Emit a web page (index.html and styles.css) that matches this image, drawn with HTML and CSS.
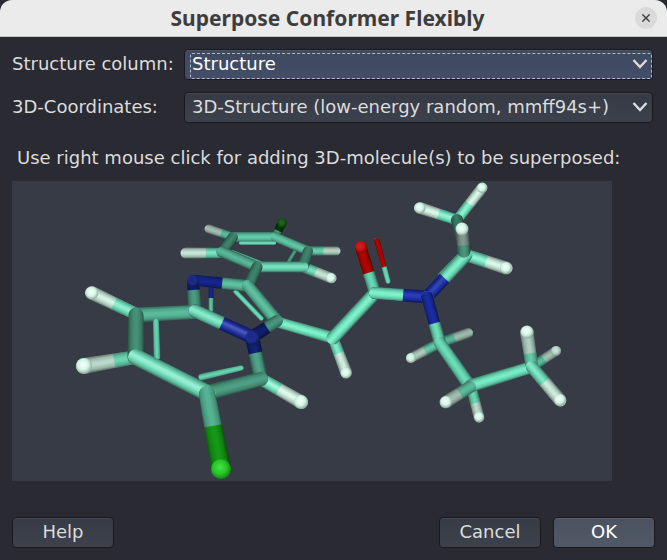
FILE: index.html
```html
<!DOCTYPE html>
<html lang="en">
<head>
<meta charset="utf-8">
<meta name="viewport" content="width=device-width, initial-scale=1">
<title>Superpose Conformer Flexibly</title>
<link rel="stylesheet" href="styles.css">
</head>
<body>
<main class="dialog">
  <header class="titlebar">
    <h1 class="title">Superpose Conformer Flexibly</h1>
    <button class="close" type="button" aria-label="Close">
      <svg viewBox="0 0 8 8" width="8" height="8" aria-hidden="true"><path d="M0.4 0.4 7.6 7.6M7.6 0.4 0.4 7.6"/></svg>
    </button>
  </header>
  <form class="content">
    <div class="fields">
      <label for="structure">Structure column:</label>
      <div class="combo combo-focused">
        <select id="structure"><option>Structure</option></select>
        <svg class="chevron" viewBox="0 0 16 10" width="16" height="10" aria-hidden="true"><path d="M1.5 1 8 8 14.5 1"/></svg>
      </div>
      <label for="coords">3D-Coordinates:</label>
      <div class="combo">
        <select id="coords"><option>3D-Structure (low-energy random, mmff94s+)</option></select>
        <svg class="chevron" viewBox="0 0 16 10" width="16" height="10" aria-hidden="true"><path d="M1.5 1 8 8 14.5 1"/></svg>
      </div>
    </div>
    <p class="hint">Use right mouse click for adding 3D-molecule(s) to be superposed:</p>
    <div class="viewer">
      <svg id="molecule" viewBox="12 181 600 300" role="img" aria-label="3D molecule"></svg>
    </div>
    <footer class="actions">
      <button class="btn" type="button">Help</button>
      <span class="spacer"></span>
      <button class="btn" type="button">Cancel</button>
      <button class="btn btn-default" type="submit">OK</button>
    </footer>
  </form>
</main>
<script src="molecule.js"></script>
</body>
</html>
```

FILE: styles.css
```css
* { box-sizing: border-box; }

body {
  margin: 0;
  background: #2a2a32;
  color: #dcdcdc;
  font: 18px/24px "DejaVu Sans", sans-serif;
}

.dialog {
  display: flex;
  flex-direction: column;
  min-height: 100vh;
}

.titlebar {
  display: grid;
  grid-template-columns: 20px 1fr 32px;
  align-items: center;
  height: 37px;
  padding: 0 5px;
  background: #ebebeb;
  border-bottom: 1px solid #c4c4c4;
  border-radius: 12px 12px 0 0;
}

.title {
  grid-column: 2;
  margin: 0;
  text-align: center;
  white-space: nowrap;
  color: #3d3d3d;
  font: bold 21px/24px "Noto Sans", sans-serif;
}

.close {
  display: grid;
  place-items: center;
  justify-self: center;
  width: 22px;
  height: 22px;
  padding: 0;
  border: 0;
  border-radius: 50%;
  background: #dadada;
}

.close path { stroke: #3d3d3d; stroke-width: 1.4; fill: none; }

.content {
  display: flex;
  flex: 1;
  flex-direction: column;
  padding: 12px;
}

.fields {
  display: grid;
  grid-template-columns: 160px 1fr;
  column-gap: 12px;
  row-gap: 12px;
  align-items: center;
  margin-right: 2px;
}

.fields label { white-space: nowrap; padding-bottom: 2px; }

.combo { position: relative; height: 31px; }

.combo select {
  width: 100%;
  height: 100%;
  padding: 0 32px 2px 7px;
  appearance: none;
  border: 1px solid #191a20;
  border-radius: 4px;
  outline: 0;
  background: linear-gradient(#363a45, #3c414c);
  box-shadow: inset 0 1px #454953;
  color: #dcdcdc;
  font: inherit;
}

.combo-focused select {
  background: linear-gradient(#3e4a60, #434d67);
  box-shadow: inset 0 1px #4b566b;
  color: #fff;
}

.combo-focused::after {
  content: "";
  position: absolute;
  inset: 4px 1px 1px 6px;
  border: 1px dashed #b4bbc8;
  border-radius: 2px;
  pointer-events: none;
}

.chevron {
  position: absolute;
  top: 10px;
  right: 5px;
  pointer-events: none;
}

.chevron path { fill: none; stroke: #dcdcdc; stroke-width: 2.4; }

.hint { margin: 23px 0 11px 5px; }

.viewer { margin-right: 43px; background: #373b45; }

.viewer svg { display: block; width: 100%; height: auto; }

.actions {
  display: flex;
  gap: 12px;
  margin-top: auto;
}

.spacer { flex: 1; }

.btn {
  width: 102px;
  height: 31px;
  padding: 0 0 2px;
  border: 1px solid #191a20;
  border-radius: 4px;
  background: linear-gradient(#363b45, #3c414c);
  box-shadow: inset 0 1px #454953;
  color: #dcdcdc;
  font: inherit;
}

.btn-default {
  background: linear-gradient(#4b515f, #515967);
  box-shadow: inset 0 1px #5b616d;
  color: #fff;
}
```

FILE: molecule.js
```js
const NS = "http://www.w3.org/2000/svg";
const svg = document.getElementById("molecule");
let nextId = 0;

const COLORS = {
  C: [116, 240, 200],
  H: [208, 244, 228],
  N: [28, 48, 176],
  O: [196, 6, 6],
  L: [28, 206, 28],
  D: [8, 92, 8]
};

function add(name, attrs, parent = svg) {
  const el = document.createElementNS(NS, name);
  for (const key in attrs) el.setAttribute(key, attrs[key]);
  parent.appendChild(el);
  return el;
}

function tone(rgb, k, white = 0) {
  return "rgb(" + rgb.map(v => Math.min(255, Math.round(v * k + (255 - v * k) * white))).join(",") + ")";
}

// A tube between two points, lit across its width; ends have round caps.
function tube(x1, y1, w1, x2, y2, w2, color, light, shine) {
  const len = Math.hypot(x2 - x1, y2 - y1);
  let nx = -(y2 - y1) / len, ny = (x2 - x1) / len;
  if (nx + ny > 0) { nx = -nx; ny = -ny; }
  const rgb = COLORS[color];
  const w = Math.max(w1, w2) / 2;
  const id = "g" + nextId++;
  const g = add("linearGradient", {
    id, gradientUnits: "userSpaceOnUse",
    x1: x1 + nx * w, y1: y1 + ny * w, x2: x1 - nx * w, y2: y1 - ny * w
  });
  [[0, 0.55, 0], [0.2, 0.86, 0], [0.42, 1, shine], [0.58, 1, shine * 0.5], [0.82, 0.82, 0], [1, 0.45, 0]]
    .forEach(([o, k, s]) => add("stop", { offset: o, "stop-color": tone(rgb, k * light, s) }, g));
  const a = w1 / 2, b = w2 / 2;
  const sweep = nx * (y2 - y1) - ny * (x2 - x1) < 0 ? 0 : 1;
  add("path", {
    fill: `url(#${id})`,
    d: `M${x1 + nx * a} ${y1 + ny * a}L${x2 + nx * b} ${y2 + ny * b}` +
       `A${b} ${b} 0 0 ${sweep} ${x2 - nx * b} ${y2 - ny * b}L${x1 - nx * a} ${y1 - ny * a}` +
       `A${a} ${a} 0 0 ${sweep} ${x1 + nx * a} ${y1 + ny * a}Z`
  });
}

// Two-colour bond: the first colour runs to fraction t, cut square there.
function bond(x1, y1, w1, x2, y2, w2, c1, c2 = c1, t = 0.5, light = 1, shine = 0.1) {
  if (c1 === c2) return tube(x1, y1, w1, x2, y2, w2, c1, light, shine);
  tube(x1, y1, w1, x2, y2, w2, c2, light, shine);
  const mx = x1 + (x2 - x1) * t, my = y1 + (y2 - y1) * t;
  const len = Math.hypot(x2 - x1, y2 - y1), ux = (x2 - x1) / len, uy = (y2 - y1) / len;
  const id = "c" + nextId++, r = 14;
  const clip = add("clipPath", { id });
  add("polygon", {
    points: [[mx - uy * r, my + ux * r], [mx + uy * r, my - ux * r],
      [x1 - ux * r + uy * r, y1 - uy * r - ux * r], [x1 - ux * r - uy * r, y1 - uy * r + ux * r]].join(" ")
  }, clip);
  tube(x1, y1, w1, x2, y2, w2, c1, light, shine);
  svg.lastChild.setAttribute("clip-path", `url(#${id})`);
}

function ball(x, y, r, color, light = 1, shine = 0.6) {
  const id = "b" + nextId++, rgb = COLORS[color];
  const g = add("radialGradient", { id, cx: 0.45, cy: 0.42, r: 0.6 });
  add("stop", { offset: 0, "stop-color": tone(rgb, 1.1 * light, shine) }, g);
  add("stop", { offset: 0.55, "stop-color": tone(rgb, light, 0.05) }, g);
  add("stop", { offset: 1, "stop-color": tone(rgb, 0.65 * light) }, g);
  add("circle", { cx: x, cy: y, r, fill: `url(#${id})` });
}

// Rear chlorophenyl ring
bond(275, 237, 8, 282, 223, 9, "C", "D", 0.45, 0.62, 0);
ball(282, 223, 4.5, "D", 0.9, 0.1);
bond(233, 237, 8, 209, 229, 9, "C", "H", 0.5, 0.78, 0);
bond(308, 251, 9, 336, 251, 9, "C", "H", 0.55, 0.85, 0.05);
bond(295, 251, 4, 289, 261, 4, "C", "C", 0, 0.65, 0);
bond(233, 237, 10, 275, 237, 10, "C", "C", 0, 0.84, 0);
bond(275, 237, 9, 308, 251, 10, "C", "C", 0, 0.82, 0);
bond(241, 243, 4, 274, 243, 4, "C", "C", 0, 0.92, 0);
bond(233, 252, 4, 261, 263, 4, "C", "C", 0, 0.85, 0);
bond(222, 253, 10, 186, 253, 11, "C", "H", 0.45, 0.92, 0.15);
bond(233, 237, 10, 222, 252, 11, "C", "C", 0, 0.54, 0);
bond(303, 267, 10, 331, 278, 11, "C", "H", 0.45, 0.92, 0.1);
ball(331, 278, 5, "H");
bond(308, 251, 10, 303, 266, 12, "C", "C", 0, 0.54, 0);
bond(222, 252, 11, 257, 267, 11, "C", "C", 0, 0.76, 0);
bond(257, 267, 11, 303, 267, 11, "C", "C", 0, 0.92, 0.1);
bond(257, 267, 11, 249, 285, 12, "C", "C", 0, 0.54, 0);

// Imidazole ring
bond(211, 288, 5, 211, 310, 5, "N", "C", 0.45, 0.8, 0);
bond(236, 292, 5, 261, 318, 5, "C", "C", 0, 0.92, 0);
bond(193, 281, 12, 195, 311, 14, "N", "C", 0.3, 0.64, 0);
bond(193, 280, 11, 248, 286, 12, "N", "C", 0.53, 0.8, 0);
ball(193, 281, 6, "N", 0.7, 0);
bond(248, 286, 12, 277, 321, 13, "C", "C", 0, 0.8, 0);

// Side chain up to the carbonyl
bond(277, 322, 11, 333, 338, 12, "C", "C", 0, 1, 0.08);
bond(252, 337, 13, 277, 321, 12, "N", "C", 0.6, 0.62, 0);
bond(333, 338, 10, 346, 372, 12, "C", "H", 0.45, 0.96, 0.15);
ball(346, 373, 5.5, "H");
bond(333, 338, 13, 375, 293, 13, "C", "C", 0, 1, 0.08);
bond(377, 241, 6, 388, 281, 5, "O", "C", 0.65, 0.9, 0);
bond(361, 248, 12, 375, 293, 12, "O", "C", 0.55, 0.9, 0);
ball(361, 247, 6, "O", 1, 0.1);

// Fused six-membered ring
bond(136, 314, 12, 92, 293, 14, "C", "H", 0.5, 0.98, 0.25);
ball(92, 293, 6.5, "H");
bond(136, 315, 15, 195, 312, 14, "C", "C", 0, 0.78, 0);
bond(156, 322, 6, 157, 356, 7, "C", "C", 0, 0.88, 0);
bond(202, 377, 7, 241, 368, 5, "C", "C", 0, 0.88, 0);
bond(136, 357, 13, 84, 366, 16, "C", "H", 0.42, 0.88, 0.05);
ball(84, 366, 8, "H", 1, 0.9);
bond(136, 315, 15, 136, 357, 17, "C", "C", 0, 0.6, 0);
bond(261, 379, 12, 301, 402, 14, "C", "H", 0.45, 1, 0.4);
ball(301, 402, 7, "H");
bond(252, 337, 14, 261, 379, 14, "N", "C", 0.38, 0.68, 0);
bond(195, 311, 13, 252, 337, 14, "C", "N", 0.47, 0.95, 0.22);
ball(252, 338, 7, "N", 0.75, 0);
bond(261, 379, 14, 207, 393, 16, "C", "C", 0, 0.66, 0);
bond(136, 357, 16, 207, 393, 17, "C", "C", 0, 0.97, 0.3);
bond(207, 394, 16, 221, 468, 20, "C", "L", 0.43, 0.74, 0);
ball(221, 469, 10, "L", 0.95, 0.2);

// Amide nitrogen and upper ethyl group
bond(440, 275, 4, 460, 256, 7, "C", "C", 0, 0.75, 0);
bond(457, 220, 10, 482, 188, 11, "C", "H", 0.5, 1, 0.2);
ball(482, 188, 5, "H");
bond(457, 220, 10, 420, 208, 12, "C", "H", 0.5, 1, 0.25);
ball(420, 208, 5.5, "H");
bond(457, 220, 12, 465, 252, 13, "C", "C", 0, 0.5, 0);
bond(466, 255, 12, 506, 268, 13, "C", "H", 0.5, 1, 0.25);
ball(506, 268, 6, "H");
bond(427, 297, 13, 466, 255, 13, "N", "C", 0.45, 0.98, 0.12);
bond(464, 251, 13, 462, 229, 13, "C", "H", 0.25, 0.62, 0);
ball(462, 229, 6.5, "H");
bond(375, 293, 12, 427, 297, 13, "C", "N", 0.54, 1, 0.08);

// Lower propyl group
bond(440, 343, 10, 468, 333, 10, "C", "H", 0.52, 0.76, 0);
bond(440, 343, 10, 411, 358, 10, "C", "H", 0.52, 0.82, 0.05);
ball(411, 358, 5, "H", 0.95, 0.3);
bond(427, 297, 12, 440, 343, 12, "N", "C", 0.57, 0.92, 0);
bond(471, 386, 10, 479, 417, 11, "C", "H", 0.55, 0.88, 0.05);
ball(479, 417, 5, "H", 1, 0.4);
bond(440, 343, 12, 470, 386, 13, "C", "C", 0, 0.92, 0);
bond(532, 367, 10, 556, 351, 10, "C", "H", 0.5, 0.78, 0);
ball(556, 351, 5, "H", 0.85, 0.2);
bond(470, 386, 13, 532, 367, 12, "C", "C", 0, 0.98, 0.04);
bond(470, 387, 12, 446, 402, 13, "C", "H", 0.42, 0.78, 0);
ball(446, 402, 6, "H", 1, 0.9);
bond(532, 367, 12, 527, 333, 14, "C", "H", 0.4, 0.84, 0);
ball(527, 332, 6.5, "H", 1, 0.9);
bond(532, 367, 12, 560, 400, 13, "C", "H", 0.45, 0.95, 0.15);
ball(560, 400, 6, "H", 1, 0.9);
```
